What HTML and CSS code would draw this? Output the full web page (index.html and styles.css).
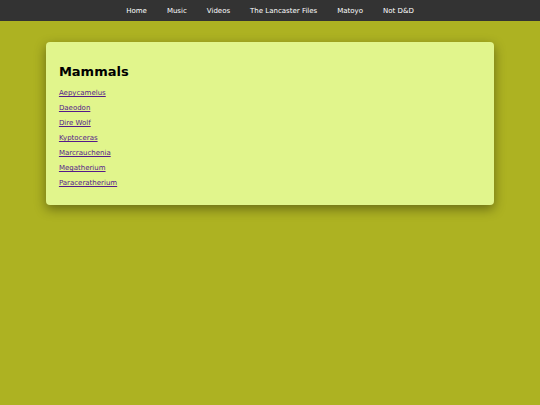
FILE: index.html
```html
<!DOCTYPE html>
<html lang="en">
<head>
    <meta charset="UTF-8">
    <meta name="viewport" content="width=device-width, initial-scale=1.0">
    <title>Mammals</title>
    <link rel="stylesheet" href="styles.css">
</head>
<body>
    <nav class="navbar">
        <a href="#">Home</a>
        <a href="#">Music</a>
        <a href="#">Videos</a>
        <a href="#">The Lancaster Files</a>
        <a href="#">Matoyo</a>
        <a href="#">Not D&amp;D</a>
    </nav>

    <main class="container">
        <h1>Mammals</h1>
        <ul class="animal-list">
            <li><a href="#">Aepycamelus</a></li>
            <li><a href="#">Daeodon</a></li>
            <li><a href="#">Dire Wolf</a></li>
            <li><a href="#">Kyptoceras</a></li>
            <li><a href="#">Marcrauchenia</a></li>
            <li><a href="#">Megatherium</a></li>
            <li><a href="#">Paraceratherium</a></li>
        </ul>
    </main>
</body>
</html>
```
FILE: styles.css
```css
/* Global styles */
body {
    font-family: "DejaVu Sans", sans-serif;
    font-size: 7px;
    line-height: 8px;
    margin: 0;
    background-color: #adb222;
    color: #000;
}

/* Navigation bar */
.navbar {
    display: flex;
    justify-content: center;
    background-color: #333;
}

.navbar a {
    padding: 7px 10px 6px;
    color: #fff;
    text-decoration: none;
}

/* Content card */
.container {
    box-sizing: border-box;
    width: 83%;
    margin: 21px auto;
    padding: 22px 13px 18px;
    background-color: #e1f58c;
    border-radius: 4px;
    box-shadow: 0 4px 12px rgba(0, 0, 0, 0.4);
}

h1 {
    margin: 0 0 9px;
    font-size: 13px;
    line-height: 16px;
}

.animal-list {
    display: flex;
    flex-direction: column;
    align-items: flex-start;
    gap: 7px;
    margin: 0;
    padding: 0;
    list-style: none;
}

.animal-list a {
    color: #551a8b;
}
```
